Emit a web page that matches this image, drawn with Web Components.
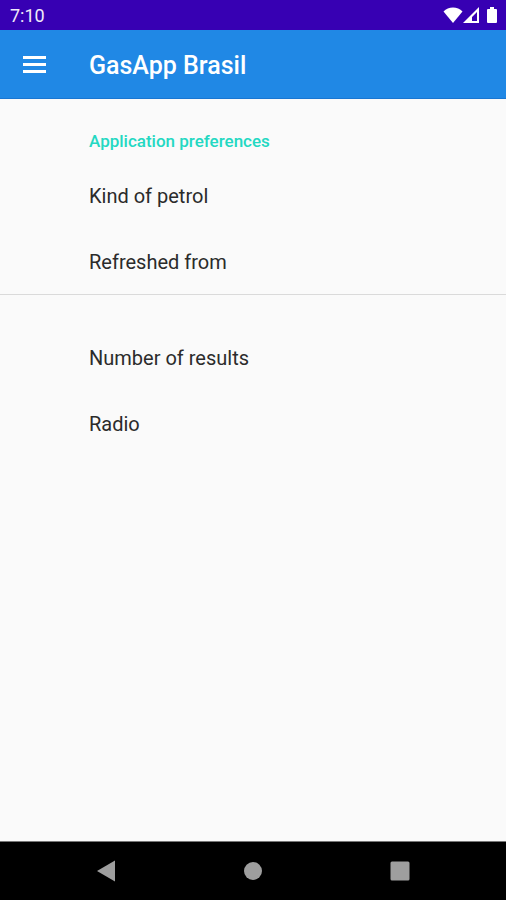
<!DOCTYPE html>
<html lang="en">
<head>
<meta charset="utf-8">
<meta name="viewport" content="width=device-width, initial-scale=1">
<title>GasApp Brasil</title>
<style>
  html, body {
    height: 100%;
    margin: 0;
  }

  body {
    font-family: Roboto, "Liberation Sans", sans-serif;
    --status-color: #3700b3;
    --primary-color: #2088e5;
    --accent-color: #24d8c2;
    --page-bg: #fafafa;
    --text-color: #2b2b2b;
    --divider-color: #dadada;
    --gutter: 89px;
  }
</style>
</head>
<body>
<gas-app>
  <status-bar slot="top" time="7:10"></status-bar>
  <app-toolbar slot="top">GasApp Brasil</app-toolbar>
  <preference-group title="Application preferences">
    <preference-item>Kind of petrol</preference-item>
    <preference-item>Refreshed from</preference-item>
  </preference-group>
  <preference-group>
    <preference-item>Number of results</preference-item>
    <preference-item>Radio</preference-item>
  </preference-group>
  <navigation-bar slot="bottom"></navigation-bar>
</gas-app>

<script>
class GasApp extends HTMLElement {
  constructor() {
    super();
    this.attachShadow({ mode: 'open' });
  }

  connectedCallback() {
    this.shadowRoot.innerHTML = `
      <style>
        :host {
          display: flex;
          flex-direction: column;
          min-height: 100%;
          background: var(--page-bg);
        }

        main {
          flex: 1;
        }
      </style>
      <slot name="top"></slot>
      <main><slot></slot></main>
      <slot name="bottom"></slot>
    `;
  }
}

class StatusBar extends HTMLElement {
  constructor() {
    super();
    this.attachShadow({ mode: 'open' });
  }

  connectedCallback() {
    this.shadowRoot.innerHTML = `
      <style>
        :host {
          display: flex;
          align-items: center;
          justify-content: space-between;
          box-sizing: border-box;
          height: 30px;
          padding: 2px 9px 0 10px;
          background: var(--status-color);
          color: #f0eafa;
          font-size: 18px;
          line-height: 28px;
        }

        .icons {
          display: flex;
          align-items: center;
          padding-bottom: 2px;
        }

        .battery {
          margin-left: 8px;
        }
      </style>
      <time>${this.getAttribute('time')}</time>
      <div class="icons">
        <svg width="20" height="16" viewBox="0 0 20 16" aria-hidden="true">
          <path fill="#fff" d="M10 16 .5 4.600C3 2 6.300.5 10 .5s7 1.500 9.500 4.100z"/>
        </svg>
        <svg width="16" height="16" viewBox="0 0 16 16" aria-hidden="true">
          <path fill="#fff" fill-rule="evenodd" d="M16 0v16H0zM14 5 9 10v4h5z"/>
        </svg>
        <svg class="battery" width="10" height="16" viewBox="0 0 10 16" aria-hidden="true">
          <path fill="#fff" d="M3 0h4v2h2q1 0 1 1v12q0 1-1 1H1q-1 0-1-1V3q0-1 1-1h2z"/>
        </svg>
      </div>
    `;
  }
}

class AppToolbar extends HTMLElement {
  constructor() {
    super();
    this.attachShadow({ mode: 'open' });
  }

  connectedCallback() {
    this.shadowRoot.innerHTML = `
      <style>
        :host {
          display: flex;
          align-items: center;
          box-sizing: border-box;
          height: 69px;
          border-bottom: 1px solid #1976d2;
          background: var(--primary-color);
          color: #fff;
        }

        button {
          box-sizing: border-box;
          width: var(--gutter);
          height: 68px;
          margin: 0;
          padding: 0 0 0 23px;
          border: 0;
          background: transparent;
          color: inherit;
          text-align: left;
          cursor: pointer;
        }

        svg {
          display: block;
        }

        h1 {
          margin: 0;
          padding-top: 4px;
          font-size: 25px;
          font-weight: 500;
          line-height: 32px;
        }
      </style>
      <button type="button" aria-label="Open menu">
        <svg width="23" height="17" viewBox="0 0 23 17" aria-hidden="true">
          <path fill="currentColor" d="M0 0h23v3H0zM0 7h23v3H0zM0 14h23v3H0z"/>
        </svg>
      </button>
      <h1><slot></slot></h1>
    `;
  }
}

class PreferenceGroup extends HTMLElement {
  constructor() {
    super();
    this.attachShadow({ mode: 'open' });
  }

  connectedCallback() {
    const title = this.getAttribute('title');
    this.shadowRoot.innerHTML = `
      <style>
        :host {
          display: block;
          padding-top: 30px;
          box-shadow: inset 0 -1px var(--divider-color);
        }

        :host(:last-of-type) {
          box-shadow: none;
        }

        h2 {
          margin: 0;
          padding: 0 16px 10px var(--gutter);
          color: var(--accent-color);
          font-size: 17px;
          font-weight: 500;
          line-height: 24px;
        }
      </style>
      ${title ? `<h2>${title}</h2>` : ''}
      <slot></slot>
    `;
  }
}

class PreferenceItem extends HTMLElement {
  constructor() {
    super();
    this.attachShadow({ mode: 'open' });
  }

  connectedCallback() {
    this.shadowRoot.innerHTML = `
      <style>
        :host {
          display: block;
        }

        button {
          display: block;
          width: 100%;
          margin: 0;
          padding: 21px 16px 21px var(--gutter);
          border: 0;
          background: transparent;
          color: var(--text-color);
          font: inherit;
          font-size: 20px;
          line-height: 24px;
          text-align: left;
          cursor: pointer;
        }
      </style>
      <button type="button"><slot></slot></button>
    `;
  }
}

class NavigationBar extends HTMLElement {
  constructor() {
    super();
    this.attachShadow({ mode: 'open' });
  }

  connectedCallback() {
    this.shadowRoot.innerHTML = `
      <style>
        :host {
          display: block;
          border-top: 1px solid #777;
          background: #000;
        }

        nav {
          display: grid;
          grid-template-columns: repeat(3, 1fr);
          padding: 0 32px;
        }

        button {
          display: flex;
          align-items: center;
          justify-content: center;
          height: 58px;
          margin: 0;
          padding: 0;
          border: 0;
          background: transparent;
          color: #9e9e9e;
          cursor: pointer;
        }
      </style>
      <nav aria-label="System">
        <button type="button" aria-label="Back">
          <svg width="20" height="22" viewBox="0 0 20 22" aria-hidden="true">
            <path fill="currentColor" d="M19 .5v21L1 11z"/>
          </svg>
        </button>
        <button type="button" aria-label="Home">
          <svg width="20" height="20" viewBox="0 0 20 20" aria-hidden="true">
            <circle cx="10" cy="10" r="9" fill="currentColor"/>
          </svg>
        </button>
        <button type="button" aria-label="Recent apps">
          <svg width="20" height="20" viewBox="0 0 20 20" aria-hidden="true">
            <rect x=".5" y=".5" width="19" height="19" rx="1.500" fill="currentColor"/>
          </svg>
        </button>
      </nav>
    `;
  }
}

customElements.define('gas-app', GasApp);
customElements.define('status-bar', StatusBar);
customElements.define('app-toolbar', AppToolbar);
customElements.define('preference-group', PreferenceGroup);
customElements.define('preference-item', PreferenceItem);
customElements.define('navigation-bar', NavigationBar);
</script>
</body>
</html>
